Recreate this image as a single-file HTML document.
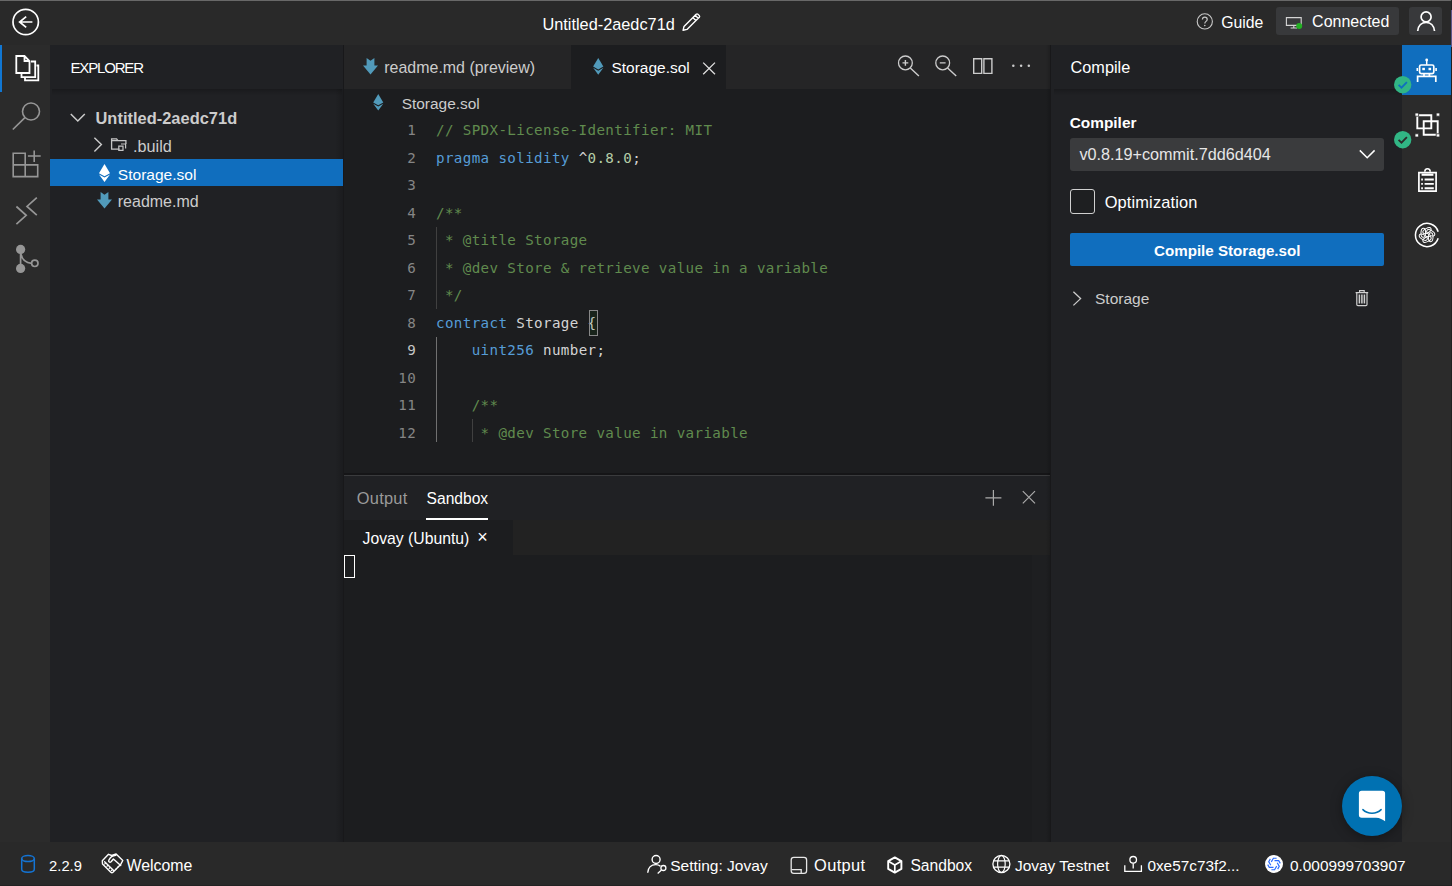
<!DOCTYPE html>
<html lang="en">
<head>
<meta charset="utf-8">
<title>Untitled-2aedc71d</title>
<style>
*{box-sizing:border-box;margin:0;padding:0}
html,body{width:1452px;height:886px;overflow:hidden;background:#292929}
body{position:relative;font-family:"Liberation Sans",sans-serif;font-size:15.4px;color:#e8e8e8}
.abs{position:absolute}
.t{position:absolute;white-space:nowrap;line-height:1}
svg{position:absolute;overflow:visible;fill:none}
#topline{left:0;top:0;width:1451px;height:1px;background:#686868}
#topbar{left:0;top:1px;width:1452px;height:44px;background:#292929}
#actbar{left:0;top:45px;width:50px;height:797px;background:#2b2b2b}
#actind{left:0;top:45px;width:2px;height:47px;background:#1177d3}
#side{left:50px;top:45px;width:293px;height:797px;background:#202124}
#sidehead{left:50px;top:45px;width:293px;height:44px;background:#202124}
#rowsel{left:50px;top:159px;width:293px;height:27px;background:#106ebe}
#div1{left:343px;top:45px;width:1.200px;height:797px;background:#18181a}
#tabbar{left:344px;top:45px;width:706px;height:44px;background:#252526}
#tabact{left:571px;top:45px;width:155px;height:44px;background:#1c1d1f}
#editor{left:344px;top:89px;width:706px;height:386px;background:#1c1d1f}
#paneldark{left:344px;top:473px;width:706px;height:2px;background:#151517}
#paneldiv{left:344px;top:475px;width:706px;height:1px;background:#3a3b3d}
#panelhead{left:344px;top:476px;width:706px;height:44px;background:#202124}
#sandul{left:426px;top:518px;width:62px;height:2px;background:#fff}
#termtabs{left:344px;top:520px;width:706px;height:35px;background:#222222}
#termtab{left:344px;top:520px;width:169px;height:35px;background:#1c1d1f}
#term{left:344px;top:555px;width:706px;height:287px;background:#1c1d1f}
#cursor{left:344px;top:555px;width:11px;height:23px;border:1px solid #fff}
#div2{left:1049.600px;top:45px;width:1.800px;height:797px;background:#18181a}
#right{left:1051.400px;top:45px;width:350.600px;height:797px;background:#202124}
#righthead{left:1051.400px;top:45px;width:350.600px;height:44px;background:#202124}
#ractbar{left:1402px;top:45px;width:50px;height:797px;background:#2b2b2b}
#ractsel{left:1402px;top:45px;width:50px;height:50px;background:#106ebe}
#status{left:0;top:842px;width:1452px;height:44px;background:#292929}
#btnconn{left:1276px;top:7px;width:123px;height:28px;border-radius:3px;background:#38393b}
#btnuser{left:1409px;top:7px;width:33px;height:28px;border-radius:3px;background:#38393b}
#sel{left:1070px;top:138px;width:314px;height:33px;border-radius:3px;background:#3a3b3d}
#chk{left:1070px;top:189px;width:25px;height:25px;border-radius:3px;border:1px solid #d0d0d0;background:#1e1f21}
#btn{left:1070px;top:233px;width:314px;height:33px;border-radius:2px;background:#106ebe}
#chat{left:1342px;top:776px;width:60px;height:60px;border-radius:50%;background:#0071b2;box-shadow:0 2px 12px rgba(0,0,0,.35)}
.ln,.cl{position:absolute;white-space:pre;line-height:16px;font-family:"DejaVu Sans Mono",monospace;font-size:14.2px;letter-spacing:.372px}
.ln{left:380px;width:36.1px;text-align:right;color:#858585}
.cl{left:436px;color:#d4d4d4}
.c{color:#608b4e}.k{color:#569cd6}.n{color:#b5cea8}
.ig{position:absolute;width:1px;background:#404040}
#brk{left:588.5px;top:309.5px;width:9px;height:26.5px;border:1px solid #888;background:rgba(0,100,0,.1)}
.shd{position:absolute;height:7px;background:linear-gradient(rgba(0,0,0,.22),rgba(0,0,0,.1) 40%,rgba(0,0,0,0))}
#termscroll{left:1032px;top:555px;width:18px;height:287px;background:#1e1f21}
#redge{left:1451px;top:1px;width:1px;height:885px;background:#202020}
#redge2{left:1451px;top:10px;width:1px;height:37px;background:#5d588a}
#sideshade{left:335px;top:45px;width:8px;height:797px;background:linear-gradient(90deg,rgba(0,0,0,0),rgba(0,0,0,.16))}
#edshade{left:1046px;top:45px;width:4px;height:797px;background:linear-gradient(90deg,rgba(0,0,0,0),rgba(0,0,0,.16))}
#botline{left:0;top:885px;width:1452px;height:1px;background:#222}
</style>
</head>
<body>
<div class="abs" id="topbar"></div>
<div class="abs" id="topline"></div>
<div class="abs" id="actbar"></div>
<div class="abs" id="actind"></div>
<div class="abs" id="side"></div>
<div class="abs" id="sideshade"></div>
<div class="abs" id="rowsel"></div>
<div class="abs" id="sidehead"></div>
<div class="shd" style="left:52px;top:89px;width:290px"></div>
<div class="abs" id="div1"></div>
<div class="abs" id="tabbar"></div>
<div class="abs" id="tabact"></div>
<div class="abs" id="editor"></div>
<div class="abs" id="paneldark"></div>
<div class="abs" id="paneldiv"></div>
<div class="abs" id="panelhead"></div>
<div class="abs" id="sandul"></div>
<div class="abs" id="termtabs"></div>
<div class="abs" id="termtab"></div>
<div class="abs" id="term"></div>
<div class="abs" id="termscroll"></div>
<div class="abs" id="cursor"></div>
<div class="abs" id="edshade"></div>
<div class="abs" id="div2"></div>
<div class="abs" id="right"></div>
<div class="abs" id="sel"></div>
<div class="abs" id="chk"></div>
<div class="abs" id="btn"></div>
<div class="abs" id="righthead"></div>
<div class="shd" style="left:1054px;top:89px;width:348px"></div>
<div class="abs" id="ractbar"></div>
<div class="abs" id="ractsel"></div>
<div class="abs" id="status"></div>
<div class="abs" id="btnconn"></div>
<div class="abs" id="btnuser"></div>
<div class="abs" id="chat"></div>
<div class="abs" id="redge"></div>
<div class="abs" id="redge2"></div>
<div class="abs" id="botline"></div>

<div class="ln" style="top:122px">1</div>
<div class="cl" style="top:122px"><span class="c">// SPDX-License-Identifier: MIT</span></div>
<div class="ln" style="top:150px">2</div>
<div class="cl" style="top:150px"><span class="k">pragma</span> <span class="k">solidity</span> ^<span class="n">0.8.0</span>;</div>
<div class="ln" style="top:177px">3</div>
<div class="ln" style="top:205px">4</div>
<div class="cl" style="top:205px"><span class="c">/**</span></div>
<div class="ln" style="top:232px">5</div>
<div class="cl" style="top:232px"><span class="c"> * @title Storage</span></div>
<div class="ln" style="top:260px">6</div>
<div class="cl" style="top:260px"><span class="c"> * @dev Store &amp; retrieve value in a variable</span></div>
<div class="ln" style="top:287px">7</div>
<div class="cl" style="top:287px"><span class="c"> */</span></div>
<div class="ln" style="top:315px">8</div>
<div class="cl" style="top:315px"><span class="k">contract</span> Storage {</div>
<div class="ln" style="top:342px;color:#c6c6c6">9</div>
<div class="cl" style="top:342px">    <span class="k">uint256</span> number;</div>
<div class="ln" style="top:370px">10</div>
<div class="ln" style="top:397px">11</div>
<div class="cl" style="top:397px">    <span class="c">/**</span></div>
<div class="ln" style="top:425px">12</div>
<div class="cl" style="top:425px">    <span class="c"> * @dev Store value in variable</span></div>

<div class="ig" style="left:436px;top:226.5px;height:82.5px"></div>
<div class="ig" style="left:436px;top:336.5px;height:105.5px;background:#707070"></div>
<div class="ig" style="left:471.7px;top:419.0px;height:23.0px"></div>
<div class="abs" id="brk"></div>

<!-- top-left back button -->
<svg style="left:12px;top:8px" width="28" height="28" viewBox="12 8 28 28"><circle cx="25.7" cy="22" r="12.7" stroke="#fff" stroke-width="1.7"/><path d="M32.4 22H19.6M26.2 16.6L19.6 22l6.6 5.4" stroke="#fff" stroke-width="1.7"/></svg>
<!-- activity: files -->
<svg style="left:14px;top:54px" width="27" height="28" viewBox="14 54 27 28"><path d="M24.5 56h-8.2v17h13.2V61zM24.5 56v5h5" stroke="#fff" stroke-width="1.8" stroke-linejoin="miter"/><path d="M31 61.5h4.2v15.6H21.5v-3" stroke="#fff" stroke-width="1.8"/><path d="M36.5 65.5h1.8v14.8H25v-2.4" stroke="#fff" stroke-width="1.8"/></svg>
<!-- activity: search -->
<svg style="left:12px;top:101px" width="30" height="30" viewBox="12 101 30 30"><circle cx="31" cy="111.500" r="8.500" stroke="#969696" stroke-width="1.600"/><path d="M24.900 117.600L12.800 129.500" stroke="#969696" stroke-width="1.600"/></svg>
<!-- activity: extensions -->
<svg style="left:11px;top:149px" width="30" height="30" viewBox="11 149 30 30"><path d="M13.200 153.200h12v23.400h-12zM13.200 164.900h24.500v11.700H25.200" stroke="#969696" stroke-width="1.600"/><path d="M34.200 150.400v11.700M27.900 156h12.800" stroke="#969696" stroke-width="1.600"/></svg>
<!-- activity: chevrons -->
<svg style="left:14px;top:196px" width="25" height="30" viewBox="14 196 25 30"><path d="M16.4 206.5l9.8 8.8-9.8 8.8M36.8 197.6l-9.8 8.8 9.8 8.8" stroke="#969696" stroke-width="1.7"/></svg>
<!-- activity: git -->
<svg style="left:14px;top:243px" width="27" height="32" viewBox="14 243 27 32"><circle cx="20.6" cy="249.4" r="4.6" fill="#969696"/><circle cx="20.6" cy="268.4" r="4.6" fill="#969696"/><circle cx="34.8" cy="263.3" r="3.2" stroke="#969696" stroke-width="1.7"/><path d="M20.6 250v18M20.6 252c1 8 5 11 11 11.3" stroke="#969696" stroke-width="1.7"/></svg>
<!-- title pencil -->
<svg style="left:682px;top:13px" width="18" height="18" viewBox="682 13 18 18"><path d="M695.2 15.2l3 3-11.2 11.2-3.9.9.9-3.9zM692.8 17.6l3 3" stroke="#fff" stroke-width="1.4" stroke-linejoin="round"/><path d="M695.2 15.2l1-1c.5-.4 1.200-.4 1.700 0l1.400 1.400c.4.500.4 1.200 0 1.700l-1 1" stroke="#fff" stroke-width="1.4"/></svg>
<!-- guide ? -->
<svg style="left:1196px;top:13px" width="18" height="18" viewBox="1196 13 18 18"><circle cx="1204.800" cy="21.400" r="7.600" stroke="#c8c8c8" stroke-width="1.100"/><path d="M1202.400 19.600c0-1.500 1.100-2.400 2.400-2.400s2.400.900 2.400 2.200c0 1.900-2.400 2-2.400 4" stroke="#c8c8c8" stroke-width="1.200"/><circle cx="1204.800" cy="25.500" r=".800" fill="#c8c8c8"/></svg>
<!-- connected monitor -->
<svg style="left:1285px;top:16px" width="18" height="14" viewBox="1285 16 18 14"><path d="M1286.400 17.600h14.800v7.800h-14.800zM1293.800 25.400v2.500M1290.600 28h6.400" stroke="#d4d4d4" stroke-width="1.100"/><circle cx="1299.200" cy="25.900" r="3" fill="#23b123"/></svg>
<!-- user -->
<svg style="left:1416px;top:10px" width="20" height="22" viewBox="1416 10 20 22"><circle cx="1426.100" cy="16.900" r="5" stroke="#fff" stroke-width="1.700"/><path d="M1417.700 31c.5-5.400 4-8.600 8.400-8.600s7.900 3.200 8.400 8.600" stroke="#fff" stroke-width="1.700"/></svg>
<!-- tree chevrons -->
<svg style="left:70px;top:113px" width="16" height="10" viewBox="70 113 16 10"><path d="M70.800 114l7 7 7-7" stroke="#ccc" stroke-width="1.500"/></svg>
<svg style="left:93px;top:137px" width="10" height="16" viewBox="93 137 10 16"><path d="M94.400 137.800l7 6.800-7 6.800" stroke="#ccc" stroke-width="1.400"/></svg>
<!-- folder icon -->
<svg style="left:110px;top:138px" width="18" height="15" viewBox="110 138 18 15"><path d="M119.500 149.200h-7.900v-10.300h5l1.300 1.700h8v3.400M111.600 140.600h6.300" stroke="#c5c5c5" stroke-width="1.300"/><path d="M118.800 146.200h4.200v4.200h-4.200zM121 144h4.600v4.600" stroke="#c5c5c5" stroke-width="1.200"/></svg>
<!-- eth icon (selected row, white) -->
<svg style="left:99px;top:164px" width="11" height="18" viewBox="0 0 11 18"><path d="M5.500 0L11 9.200 5.500 12.300 0 9.200z" fill="#fff"/><path d="M5.500 13.600L11 10.500 5.500 18 0 10.500z" fill="#fff"/></svg>
<!-- md icon row -->
<svg style="left:96.500px;top:192px" width="15" height="16.500" viewBox="0 0 15 16.500"><path d="M3.600 0l3.900 2.700L11.400 0v7.400H15L7.500 16.500 0 7.400h3.600z" fill="#519aba"/></svg>
<!-- tab md icon -->
<svg style="left:362.500px;top:58px" width="15" height="16.500" viewBox="0 0 15 16.500"><path d="M3.600 0l3.900 2.700L11.400 0v7.400H15L7.500 16.500 0 7.400h3.600z" fill="#519aba"/></svg>
<!-- tab eth icon -->
<svg style="left:592.500px;top:57.800px" width="10.500" height="16.800" viewBox="0 0 11 18"><path d="M5.500 0L11 9.200 5.500 12.300 0 9.200z" fill="#519aba"/><path d="M5.500 13.600L11 10.500 5.500 18 0 10.500z" fill="#519aba"/></svg>
<!-- breadcrumb eth icon -->
<svg style="left:372.500px;top:94px" width="10.500" height="16.500" viewBox="0 0 11 18"><path d="M5.500 0L11 9.200 5.500 12.300 0 9.200z" fill="#519aba"/><path d="M5.500 13.600L11 10.500 5.500 18 0 10.500z" fill="#519aba"/></svg>
<!-- tab close -->
<svg style="left:702px;top:62px" width="14" height="13" viewBox="702 62 14 13"><path d="M703.200 62.600l11.800 11.600M715 62.600l-11.800 11.600" stroke="#e0e0e0" stroke-width="1.300"/></svg>
<!-- editor toolbar -->
<svg style="left:897px;top:55px" width="23" height="22" viewBox="897 55 23 22"><circle cx="905.400" cy="62.900" r="6.900" stroke="#ccc" stroke-width="1.300"/><path d="M910.300 67.900l8.600 8.200M902.500 62.900h5.800M905.400 60v5.800" stroke="#ccc" stroke-width="1.400"/></svg>
<svg style="left:934px;top:55px" width="23" height="22" viewBox="934 55 23 22"><circle cx="942.700" cy="62.900" r="6.900" stroke="#ccc" stroke-width="1.300"/><path d="M947.600 67.900l8.600 8.200M939.800 62.900h5.800" stroke="#ccc" stroke-width="1.400"/></svg>
<svg style="left:972px;top:57px" width="22" height="18" viewBox="972 57 22 18"><path d="M973.700 58.700h8v14.700h-8zM983.900 58.700h8v14.700h-8z" stroke="#ccc" stroke-width="1.400"/></svg>
<svg style="left:1011px;top:63px" width="20" height="6" viewBox="1011 63 20 6"><circle cx="1013.300" cy="65.800" r="1.250" fill="#ccc"/><circle cx="1021.100" cy="65.800" r="1.250" fill="#ccc"/><circle cx="1028.800" cy="65.800" r="1.250" fill="#ccc"/></svg>
<!-- panel actions -->
<svg style="left:984px;top:489px" width="18" height="18" viewBox="984 489 18 18"><path d="M993.400 490v15.800M985.400 497.900h16" stroke="#aaa" stroke-width="1.200"/></svg>
<svg style="left:1022px;top:490px" width="14" height="14" viewBox="1022 490 14 14"><path d="M1022.800 491.200l12.200 12.200M1035 491.200l-12.200 12.200" stroke="#aaa" stroke-width="1.200"/></svg>
<!-- terminal tab close -->
<div class="t" id="px" style="left:477.300px;top:527px;line-height:20px;font-size:18px;color:#fff">×</div>
<!-- select chevron -->
<svg style="left:1359px;top:149px" width="17" height="11" viewBox="1359 149 17 11"><path d="M1359.800 150.400l7.400 7.400 7.400-7.400" stroke="#fff" stroke-width="1.500"/></svg>
<!-- contract chevron -->
<svg style="left:1072px;top:291px" width="10" height="16" viewBox="1072 291 10 16"><path d="M1073.400 291.800l7.200 6.800-7.200 6.800" stroke="#ccc" stroke-width="1.300"/></svg>
<!-- trash -->
<svg style="left:1355px;top:289px" width="14" height="18" viewBox="1355 289 14 18"><path d="M1355.600 292.600h12.600M1359.600 292.400v-1.800h4.600v1.800M1356.800 293v11.400c0 .800.500 1.200 1.200 1.200h7.800c.700 0 1.200-.400 1.200-1.200V293" stroke="#d0d0d0" stroke-width="1.200"/><path d="M1359.400 294.600v8.800M1361.900 294.600v8.800M1364.400 294.600v8.800" stroke="#d0d0d0" stroke-width="1.500"/></svg>
<!-- right bar: robot -->
<svg style="left:1416px;top:58px" width="22" height="25" viewBox="1416 58 22 25"><path d="M1426.700 60.800v4" stroke="#fff" stroke-width="1.500"/><circle cx="1426.700" cy="60" r="1.400" fill="#fff"/><rect x="1419.600" y="65" width="14.200" height="8.600" rx="1.600" stroke="#fff" stroke-width="1.700"/><path d="M1417.300 68v3M1436.100 68v3" stroke="#fff" stroke-width="1.600"/><rect x="1422.300" y="67.800" width="2.600" height="2.400" fill="#fff"/><rect x="1428.500" y="67.800" width="2.600" height="2.400" fill="#fff"/><path d="M1417.600 82v-5.600h18.200V82M1424 76.400v-2.600M1429.400 76.400v-2.600" stroke="#fff" stroke-width="1.700"/></svg>
<!-- right bar: group -->
<svg style="left:1414px;top:112px" width="27" height="26" viewBox="1414 112 27 26"><path d="M1417.300 115.200h14v13.200h-14zM1423.700 121.300h14v13.400h-14z" stroke="#fff" stroke-width="1.900"/><path d="M1415 113h3.600v3.200h-3.600zM1436.200 113h3.600v3.200h-3.600zM1415 133.800h3.600v3.200h-3.600zM1436.200 133.800h3.600v3.200h-3.600z" fill="#fff" stroke="#2b2b2b" stroke-width=".8"/></svg>
<!-- right bar: clipboard -->
<svg style="left:1417px;top:167px" width="21" height="26" viewBox="1417 167 21 26"><path d="M1418.900 172.600h17.200v18.600h-17.200z" stroke="#fff" stroke-width="1.700"/><path d="M1424.800 171.800c0-1.900.900-3 2.700-3s2.700 1.100 2.700 3" stroke="#fff" stroke-width="1.500"/><path d="M1421.600 174.700h11.800" stroke="#fff" stroke-width="2.200"/><path d="M1421.200 179.500h1.700M1424.600 179.500h9.200M1421.200 183.900h1.700M1424.600 183.900h9.200M1421.200 188.200h1.700M1424.600 188.200h9.200" stroke="#fff" stroke-width="1.900"/></svg>
<!-- right bar: openai-like -->
<svg style="left:1413.900px;top:221.900px" width="26" height="26" viewBox="-13 -13 26 26"><path d="M11.150 -3.300A11.600 11.600 0 1 0 11.150 3.300" stroke="#fff" stroke-width="1.500"/><g stroke="#fff" stroke-width="1"><ellipse rx="2.300" ry="4.500" transform="rotate(0) translate(0 -4.300) rotate(62)"/><ellipse rx="2.300" ry="4.500" transform="rotate(60) translate(0 -4.300) rotate(62)"/><ellipse rx="2.300" ry="4.500" transform="rotate(120) translate(0 -4.300) rotate(62)"/><ellipse rx="2.300" ry="4.500" transform="rotate(180) translate(0 -4.300) rotate(62)"/><ellipse rx="2.300" ry="4.500" transform="rotate(240) translate(0 -4.300) rotate(62)"/><ellipse rx="2.300" ry="4.500" transform="rotate(300) translate(0 -4.300) rotate(62)"/></g></svg>
<!-- green badges -->
<svg style="left:1394px;top:75.700px" width="17.400" height="17.400" viewBox="0 0 17.400 17.400"><circle cx="8.700" cy="8.700" r="8.700" fill="#31b685"/><path d="M4.600 8.800l2.900 2.900 5.400-5.600" stroke="#106ebe" stroke-width="1.800"/></svg>
<svg style="left:1394px;top:130.900px" width="17.400" height="17.400" viewBox="0 0 17.400 17.400"><circle cx="8.700" cy="8.700" r="8.700" fill="#31b685"/><path d="M4.600 8.800l2.900 2.900 5.400-5.600" stroke="#2b2b2b" stroke-width="1.800"/></svg>
<!-- chat icon -->
<svg style="left:1358px;top:790px" width="28" height="32" viewBox="1358 790 28 32"><path d="M1361.700 790.700h20.600a2.800 2.800 0 0 1 2.800 2.800v27.700c-2.600-1.400-5.200-3.400-9-3.400h-14.400a2.800 2.800 0 0 1-2.800-2.800v-21.500a2.800 2.800 0 0 1 2.800-2.800z" fill="#fff"/><path d="M1362.900 809.600c4.800 4.800 13.400 4.800 18.200 0" stroke="#0071b2" stroke-width="1.500" stroke-linecap="round"/></svg>
<!-- status: cylinder -->
<svg style="left:20px;top:854px" width="16" height="20" viewBox="20 854 16 20"><ellipse cx="28" cy="858.600" rx="6.300" ry="3" stroke="#1474d4" stroke-width="1.500"/><path d="M21.700 858.600v10.600c0 1.700 2.800 3 6.300 3s6.300-1.300 6.300-3v-10.600" stroke="#1474d4" stroke-width="1.500"/></svg>
<!-- status: handshake -->
<svg style="left:101px;top:853px" width="23" height="21" viewBox="101 853 23 21"><g stroke="#fff" stroke-width="1.400" stroke-linejoin="round" stroke-linecap="round"><path d="M108.500 854.300L102.300 860.700l.2 3.300 8.300 8.200c.700.600 1.500.600 2.200 0l7.600-7.600 2.200-4.100-6.700-6.500-4.300 1.500z"/><path d="M115.800 855.200c-3.400.300-5.900 2.600-7 5-.600 1.600 1 2.700 2.300 1.600l2.300-2.800 7.300 6.500"/><path d="M104.600 861.700l9 8.700"/></g><path d="M104.400 864.400l1.700-1.700M106.600 866.600l1.700-1.700M108.800 868.800l1.700-1.700M111 871l1.700-1.700M115.200 869.800l1.400-1.500M117.400 867.600l1.400-1.500" stroke="#fff" stroke-width="1.200"/></svg>
<!-- status: user setting -->
<svg style="left:646px;top:854px" width="22" height="21" viewBox="646 854 22 21"><circle cx="656.100" cy="859.500" r="4" stroke="#fff" stroke-width="1.400"/><path d="M647.700 872.800c.300-5 3.600-8.200 8-8.200 1.800 0 3.400.500 4.700 1.500" stroke="#fff" stroke-width="1.400"/><circle cx="663.400" cy="868" r="2.500" stroke="#fff" stroke-width="1.300"/><path d="M661.500 869.900l-3.800 3.500" stroke="#fff" stroke-width="1.300"/></svg>
<!-- status: output -->
<svg style="left:790px;top:856px" width="18" height="19" viewBox="790 856 18 19"><rect x="791.200" y="857.400" width="15.400" height="16" rx="2.600" stroke="#e6e6e6" stroke-width="1.300"/><path d="M791.600 869.600h9.600v3.600" stroke="#e6e6e6" stroke-width="1.300"/></svg>
<!-- status: cube -->
<svg style="left:886px;top:856px" width="18" height="19" viewBox="886 856 18 19"><path d="M894.800 857.400l6.600 3.700v7.800l-6.600 3.700-6.600-3.700v-7.800z" stroke="#fff" stroke-width="1.900" stroke-linejoin="round"/><path d="M888.400 861.300l6.400 3.600 6.400-3.600M894.800 864.900v7.400" stroke="#fff" stroke-width="1.700"/></svg>
<!-- status: globe -->
<svg style="left:991px;top:854px" width="21" height="20" viewBox="991 854 21 20"><circle cx="1001.400" cy="864" r="8.500" stroke="#fff" stroke-width="1.300"/><ellipse cx="1001.400" cy="864" rx="3.800" ry="8.500" stroke="#fff" stroke-width="1.200"/><path d="M993.600 860.800h15.600M993.600 867.200h15.600" stroke="#fff" stroke-width="1.200"/></svg>
<!-- status: account -->
<svg style="left:1123px;top:855px" width="20" height="18" viewBox="1123 855 20 18"><circle cx="1133.200" cy="859.800" r="3.300" stroke="#fff" stroke-width="1.300"/><path d="M1133.200 863.200v5.400M1124.800 865.200v6.200h16.600v-6.200" stroke="#fff" stroke-width="1.300"/></svg>
<!-- status: token -->
<svg style="left:1264.550px;top:854.800px" width="18" height="18" viewBox="-9 -9 18 18"><circle r="9" fill="#fff"/><g stroke="#2b6cff" stroke-width="1.150" stroke-linejoin="miter"><path d="M.500 -3.400L4.700 -3.400 6.300 -.600" transform="rotate(0)"/><path d="M.500 -3.400L4.700 -3.400 6.300 -.600" transform="rotate(60)"/><path d="M.500 -3.400L4.700 -3.400 6.300 -.600" transform="rotate(120)"/><path d="M.500 -3.400L4.700 -3.400 6.300 -.600" transform="rotate(180)"/><path d="M.500 -3.400L4.700 -3.400 6.300 -.600" transform="rotate(240)"/><path d="M.500 -3.400L4.700 -3.400 6.300 -.600" transform="rotate(300)"/></g></svg>

<div class="t" id="tt" style="left:542.4px;top:15px;line-height:18px;font-size:16.32px;color:#ffffff">Untitled-2aedc71d</div>
<div class="t" id="tg" style="left:1221.2px;top:14px;line-height:17px;font-size:15.81px;color:#ffffff">Guide</div>
<div class="t" id="tc" style="left:1312.1px;top:13px;line-height:17px;font-size:15.98px;color:#ffffff">Connected</div>
<div class="t" id="te" style="left:70.5px;top:59px;line-height:17px;font-size:15.00px;color:#ffffff;letter-spacing:-1.17px">EXPLORER</div>
<div class="t" id="tp" style="left:95.5px;top:109px;line-height:18px;font-size:16.40px;color:#cccccc;font-weight:700;letter-spacing:0.03px">Untitled-2aedc71d</div>
<div class="t" id="tb" style="left:133.0px;top:137px;line-height:18px;font-size:16.23px;color:#cccccc">.build</div>
<div class="t" id="ts" style="left:117.8px;top:166px;line-height:17px;font-size:15.56px;color:#ffffff">Storage.sol</div>
<div class="t" id="tr" style="left:117.8px;top:193px;line-height:17px;font-size:15.98px;color:#cccccc">readme.md</div>
<div class="t" id="t1" style="left:384.3px;top:59px;line-height:17px;font-size:15.96px;color:#cccccc">readme.md (preview)</div>
<div class="t" id="t2" style="left:611.5px;top:59px;line-height:17px;font-size:15.48px;color:#ffffff">Storage.sol</div>
<div class="t" id="tbc" style="left:401.7px;top:95px;line-height:17px;font-size:15.44px;color:#cccccc">Storage.sol</div>
<div class="t" id="po" style="left:356.8px;top:489px;line-height:18px;font-size:16.40px;color:#9a9a9a;letter-spacing:0.25px">Output</div>
<div class="t" id="ps" style="left:426.6px;top:490px;line-height:17px;font-size:15.60px;color:#ffffff">Sandbox</div>
<div class="t" id="pj" style="left:362.5px;top:530px;line-height:17px;font-size:15.75px;color:#ffffff">Jovay (Ubuntu)</div>
<div class="t" id="rc" style="left:1070.6px;top:58px;line-height:18px;font-size:16.25px;color:#ffffff">Compile</div>
<div class="t" id="rcl" style="left:1069.7px;top:114px;line-height:17px;font-size:15.41px;color:#ffffff;font-weight:700">Compiler</div>
<div class="t" id="rv" style="left:1079.4px;top:145px;line-height:18px;font-size:16.22px;color:#e6e6e6">v0.8.19+commit.7dd6d404</div>
<div class="t" id="ro" style="left:1104.7px;top:193px;line-height:18px;font-size:16.40px;color:#ffffff;letter-spacing:0.14px">Optimization</div>
<div class="t" id="rb" style="left:1154.0px;top:242px;line-height:17px;font-size:15.15px;color:#ffffff;font-weight:700">Compile Storage.sol</div>
<div class="t" id="rs" style="left:1095.0px;top:290px;line-height:17px;font-size:15.50px;color:#cccccc">Storage</div>
<div class="t" id="s1" style="left:49.1px;top:858px;line-height:16px;font-size:14.75px;color:#ffffff">2.2.9</div>
<div class="t" id="s2" style="left:126.5px;top:857px;line-height:17px;font-size:15.88px;color:#ffffff">Welcome</div>
<div class="t" id="s3" style="left:670.2px;top:857px;line-height:17px;font-size:15.52px;color:#ffffff">Setting: Jovay</div>
<div class="t" id="s4" style="left:814.0px;top:856px;line-height:18px;font-size:16.40px;color:#ffffff;letter-spacing:0.39px">Output</div>
<div class="t" id="s5" style="left:910.4px;top:857px;line-height:17px;font-size:15.65px;color:#ffffff">Sandbox</div>
<div class="t" id="s6" style="left:1014.9px;top:857px;line-height:17px;font-size:15.47px;color:#ffffff">Jovay Testnet</div>
<div class="t" id="s7" style="left:1147.4px;top:857px;line-height:17px;font-size:15.37px;color:#ffffff">0xe57c73f2...</div>
<div class="t" id="s8" style="left:1289.9px;top:857px;line-height:17px;font-size:15.42px;color:#ffffff">0.000999703907</div>
</body>
</html>
